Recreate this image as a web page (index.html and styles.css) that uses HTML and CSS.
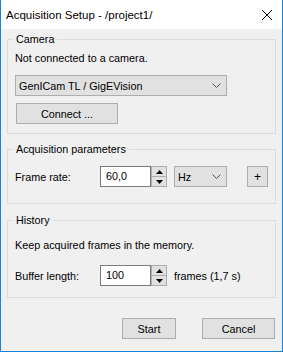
FILE: index.html
```html
<!DOCTYPE html>
<html lang="en">

<head>
    <meta charset="UTF-8">
    <title>Acquisition Setup - /project1/</title>
    <link rel="stylesheet" href="styles.css">
</head>

<body>
    <div class="window">
        <div class="titlebar">
            <span class="title">Acquisition Setup - /project1/</span>
            <svg class="close" width="10" height="10" viewBox="0 0 10 10">
                <path d="M0 0L10 10M10 0L0 10" stroke="#000" stroke-width="1" fill="none" />
            </svg>
        </div>

        <div class="client">
            <fieldset class="group">
                <legend>Camera</legend>
                <p class="note">Not connected to a camera.</p>
                <div class="combo camera-combo">
                    <span>GenICam TL / GigEVision</span>
                    <svg class="chevron" width="9" height="5" viewBox="0 0 9 5">
                        <polyline points="0.5,0.5 4.5,4.5 8.5,0.5" stroke="#555" fill="none" />
                    </svg>
                </div>
                <button class="btn connect">Connect ...</button>
            </fieldset>

            <fieldset class="group acquisition">
                <legend>Acquisition parameters</legend>
                <div class="row">
                    <span class="label">Frame rate:</span>
                    <div class="spin">
                        <span class="field">60,0</span>
                        <span class="arrows">
                            <span class="arrow"><svg width="7" height="4" viewBox="0 0 7 4"><polygon points="0,4 3.5,0 7,4" fill="#000" /></svg></span>
                            <span class="arrow"><svg width="7" height="4" viewBox="0 0 7 4"><polygon points="0,0 7,0 3.5,4" fill="#000" /></svg></span>
                        </span>
                    </div>
                    <div class="combo unit-combo">
                        <span>Hz</span>
                        <svg class="chevron" width="9" height="5" viewBox="0 0 9 5">
                            <polyline points="0.5,0.5 4.5,4.5 8.5,0.5" stroke="#555" fill="none" />
                        </svg>
                    </div>
                    <button class="btn plus">+</button>
                </div>
            </fieldset>

            <fieldset class="group history">
                <legend>History</legend>
                <p class="note history-note">Keep acquired frames in the memory.</p>
                <div class="row buffer-row">
                    <span class="label">Buffer length:</span>
                    <div class="spin">
                        <span class="field">100</span>
                        <span class="arrows">
                            <span class="arrow"><svg width="7" height="4" viewBox="0 0 7 4"><polygon points="0,4 3.5,0 7,4" fill="#000" /></svg></span>
                            <span class="arrow"><svg width="7" height="4" viewBox="0 0 7 4"><polygon points="0,0 7,0 3.5,4" fill="#000" /></svg></span>
                        </span>
                    </div>
                    <span class="suffix">frames (1,7 s)</span>
                </div>
            </fieldset>

            <div class="actions">
                <button class="btn start">Start</button>
                <button class="btn cancel">Cancel</button>
            </div>
        </div>
    </div>
</body>

</html>
```

FILE: styles.css
```css
* {
    box-sizing: border-box;
}

body {
    margin: 0;
    font-family: "Liberation Sans", Arial, sans-serif;
    font-size: 10.8px;
    color: #000;
    background-color: #fff;
}

.window {
    width: 283px;
    height: 352px;
    display: flex;
    flex-direction: column;
    background-color: #f0f0f0;
    border: 1px solid #1883d7;
    border-top: 0;
}

.titlebar {
    height: 29px;
    display: flex;
    align-items: center;
    padding-left: 5px;
    background-color: #fff;
}

.title {
    font-size: 11.5px;
}

.close {
    margin-left: auto;
    margin-right: 10px;
}

.client {
    flex: 1;
    display: flex;
    flex-direction: column;
    padding: 3px 6px 0;
}

.group {
    margin: 0;
    min-width: 0;
    padding: 0 7px 9px;
    border: 1px solid #dcdcdc;
}

.group legend {
    margin-left: -2px;
    padding: 0 3px;
    line-height: 15px;
}

.note {
    margin: 3px 0 0;
    line-height: 16px;
}

.combo {
    height: 21px;
    display: flex;
    align-items: center;
    padding-left: 3px;
    background-color: #e1e1e1;
    border: 1px solid #adadad;
}

.chevron {
    margin-left: auto;
    margin-right: 5px;
}

.camera-combo {
    width: 212px;
    margin-top: 9px;
}

.btn {
    height: 21px;
    padding: 0;
    font: inherit;
    color: #000;
    background-color: #e1e1e1;
    border: 1px solid #adadad;
}

.connect {
    display: block;
    width: 102px;
    margin: 7px 0 0 1px;
}

.acquisition {
    margin-top: 8px;
    padding-bottom: 16px;
}

.row {
    height: 21px;
    display: flex;
    align-items: center;
    margin-top: 9px;
}

.label {
    width: 85px;
}

.spin {
    width: 67px;
    height: 21px;
    display: flex;
}

.spin .field {
    flex: 1;
    padding-left: 5px;
    line-height: 19px;
    background-color: #fff;
    border: 1px solid #7a7a7a;
}

.arrows {
    width: 16px;
    display: flex;
    flex-direction: column;
    background-color: #e1e1e1;
    border: 1px solid #adadad;
}

.arrow {
    flex: 1;
    display: flex;
    align-items: center;
    justify-content: center;
}

.arrow + .arrow {
    border-top: 1px solid #adadad;
}

.unit-combo {
    width: 53px;
    margin-left: 7px;
}

.plus {
    width: 21px;
    margin-left: 20px;
    font-size: 12px;
}

.history {
    margin-top: 9px;
    padding-bottom: 11px;
}

.history-note {
    margin-top: 9px;
}

.buffer-row {
    margin-top: 12px;
}

.suffix {
    margin-left: 7px;
}

.actions {
    display: flex;
    justify-content: flex-end;
    gap: 26px;
    margin-top: 20px;
    padding-right: 1px;
}

.start {
    width: 54px;
}

.cancel {
    width: 73px;
}
```
